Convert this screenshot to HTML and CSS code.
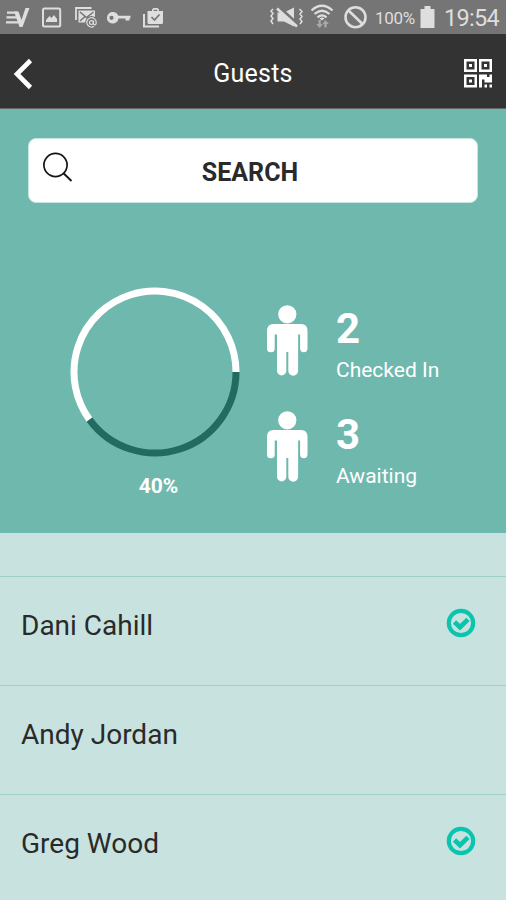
FILE: index.html
```html
<!DOCTYPE html>
<html lang="en">
<head>
<meta charset="utf-8">
<title>Guests</title>
<link rel="stylesheet" href="styles.css">
</head>
<body>
<svg width="0" height="0" class="defs">
  <symbol id="person" viewBox="267 305 41 71">
    <circle cx="287.300" cy="314.300" r="9.100"/>
    <path d="M273.500 324H301Q307.500 324 307.500 331V348.500A3.700 3.700 0 0 1 300.100 348.500V334.500H298.100V370.800A4.300 4.300 0 0 1 288.300 370.800V352H286.300V370.800A4.300 4.300 0 0 1 277 370.800V334.500H274.700V348.500A3.700 3.700 0 0 1 267 348.500V331Q267 324 273.500 324Z"/>
  </symbol>
  <symbol id="check" viewBox="0 0 30 30">
    <circle cx="15" cy="15" r="12.200" fill="none" stroke="currentColor" stroke-width="4.200"/>
    <path d="M8.500 14L14 19.200L22 11.400" fill="none" stroke="currentColor" stroke-width="4.800"/>
  </symbol>
</svg>
<div class="status">
  <svg width="35" height="34" viewBox="0 0 35 34">
    <path d="M7 12.700H17M6.500 17.300H18M6 22.300H18" stroke="#dedede" stroke-width="2.300"/>
    <path d="M14 11.500H18.500L21.500 20L25.500 8H29.500L22.500 27H19.500Z" fill="#dedede"/>
  </svg>
  <svg width="34" height="34" viewBox="35 0 34 34">
    <rect x="43" y="8.500" width="17.200" height="18" rx="1.500" fill="none" stroke="#dedede" stroke-width="2"/>
    <path d="M46 22V20L49.500 16L51.500 18L54 15L57 19V22Z" fill="#dedede"/>
  </svg>
  <svg width="33" height="34" viewBox="69 0 33 34">
    <path d="M76 20V8H91.500" fill="none" stroke="#dedede" stroke-width="1.800"/>
    <path d="M78.500 10.500H95V17H89L86 22.500H78.500Z" fill="#dedede"/>
    <path d="M80 12L86.500 17.500L93.500 12M80 21L85 16.500" fill="none" stroke="#757575" stroke-width="1.500"/>
    <circle cx="91.500" cy="22.200" r="6.200" fill="#757575"/>
    <path d="M94 26.300A4.700 4.700 0 1 1 96.200 22.200Q96.200 24.800 94.600 24.800Q93.200 24.800 93.400 22.800L93.700 20.500" fill="none" stroke="#dedede" stroke-width="1.200"/>
    <circle cx="91.400" cy="22.600" r="1.900" fill="none" stroke="#dedede" stroke-width="1.200"/>
  </svg>
  <svg width="35" height="34" viewBox="102 0 35 34">
    <path fill-rule="evenodd" d="M113 12A5.800 5.800 0 0 1 118.300 15.800H130.500V18.300H129.500V20.500H125.500V18.500H118.500A5.800 5.800 0 1 1 113 12ZM111.500 15.700A2.100 2.100 0 1 0 111.500 19.900A2.100 2.100 0 0 0 111.500 15.700Z" fill="#dedede"/>
  </svg>
  <svg width="33" height="34" viewBox="137 0 33 34">
    <path d="M144 14V26.500H159" fill="none" stroke="#dedede" stroke-width="2"/>
    <path fill-rule="evenodd" d="M152 11V9.500L153.500 8H157.500L159 9.500V11H163V22.500Q163 24 161.500 24H149Q147.500 24 147.500 22.500V11ZM153.700 11H157.300V9.700H153.700Z" fill="#dedede"/>
    <path d="M151.500 17L154.500 20L159.500 14.500" fill="none" stroke="#757575" stroke-width="1.700"/>
  </svg>
  <span class="grow"></span>
  <svg width="41" height="34" viewBox="266 0 41 34">
    <path d="M277.500 12.500H284L294 7.500V26.500L284 21.500H277.500Z" fill="#dedede"/>
    <path d="M279.500 8.500L298.500 26" stroke="#757575" stroke-width="4.500"/>
    <path d="M277 8.500L297 26.500" stroke="#dedede" stroke-width="2.600"/>
    <path d="M273 9L271 11L273 13.500L271 16L273 18.500L271 21L273 24M299.500 9L302 11.500L300 14L302 16.500L300 19L302 21.500L300 24" fill="none" stroke="#dedede" stroke-width="1.500"/>
  </svg>
  <svg width="31" height="34" viewBox="307 0 31 34">
    <path d="M311.500 10.500Q322 1 332.500 10.500M314.500 14Q322 7.500 329.500 14M317.500 17.300Q322 13.500 326.500 17.300" fill="none" stroke="#dedede" stroke-width="2.200"/>
    <path d="M319.500 18.500L322 17.200L324.500 18.500L322 20.500Z" fill="#dedede"/>
    <path d="M318.500 20H320.800V24H323L319.600 28L316.200 24H318.500ZM324.300 27.500V24H322.500L325.500 20L328.800 24H326.600V27.500Z" fill="#a9a9a9"/>
  </svg>
  <svg width="35" height="34" viewBox="338 0 35 34">
    <circle cx="355.500" cy="17.200" r="10" fill="none" stroke="#dedede" stroke-width="2.600"/>
    <path d="M348.500 10.500L362.500 24" stroke="#dedede" stroke-width="2.600"/>
  </svg>
  <span class="pct">100%</span>
  <svg width="18" height="34" viewBox="419 0 18 34">
    <path d="M424.500 6H430.500V9H434.500V28H420.500V9H424.500Z" fill="#dedede"/>
  </svg>
  <span class="time">19:54</span>
</div>
<header class="bar">
  <svg width="34" height="34" viewBox="7 57 34 34">
    <path d="M30.500 60.500L17 74L30.500 87.500" fill="none" stroke="#fff" stroke-width="4.600"/>
  </svg>
  <h1 class="title">Guests</h1>
  <svg class="qr" width="28" height="29" viewBox="0 0 28 29">
    <g fill="none" stroke="#fff" stroke-width="2.500">
      <rect x="1.250" y="1.250" width="10.500" height="10.500"/>
      <rect x="16.250" y="1.250" width="10.500" height="10.500"/>
      <rect x="1.250" y="16.750" width="10.500" height="10.500"/>
    </g>
    <path d="M5 5h3v3h-3zM20 5h3v3h-3zM5 20.500h3v3h-3zM15 15.500H23V18H25.500V15.500H28V23.500H20.500V20.500H18V28.500H15ZM20.500 25.500h2.500v3h-2.500zM25.500 25.500h2.500v3h-2.500z" fill="#fff"/>
  </svg>
</header>
<section class="summary">
  <div class="search">
    <svg width="32" height="32" viewBox="42 152 32 32">
      <circle cx="55.500" cy="165" r="11.600" fill="none" stroke="#151515" stroke-width="1.700"/>
      <path d="M63.500 173.300L71.500 181" stroke="#151515" stroke-width="1.900"/>
    </svg>
    <span class="search-label">SEARCH</span>
  </div>
  <div class="stats">
    <div class="progress">
      <svg width="170" height="170" viewBox="0 0 170 170">
        <path d="M19.470 132.610A81 81 0 1 1 166 85" fill="none" stroke="#fff" stroke-width="7"/>
        <path d="M166 85A81 81 0 0 1 19.470 132.610" fill="none" stroke="#236b60" stroke-width="7"/>
      </svg>
      <span class="progress-label">40%</span>
    </div>
    <div class="counts">
      <div class="count">
        <svg width="41" height="71"><use href="#person"/></svg>
        <div><div class="number">2</div><div class="label">Checked In</div></div>
      </div>
      <div class="count">
        <svg width="41" height="71"><use href="#person"/></svg>
        <div><div class="number">3</div><div class="label">Awaiting</div></div>
      </div>
    </div>
  </div>
</section>
<ul class="guests">
  <li><span>Dani Cahill</span><svg width="30" height="30"><use href="#check"/></svg></li>
  <li><span>Andy Jordan</span></li>
  <li><span>Greg Wood</span><svg width="30" height="30"><use href="#check"/></svg></li>
</ul>
</body>
</html>
```
FILE: styles.css
```css
* { box-sizing: border-box; }
body {
  margin: 0;
  height: 900px;
  overflow: hidden;
  display: flex;
  flex-direction: column;
  background: #c8e3df;
  font-family: Roboto, sans-serif;
  color: #2a2a2a;
}
svg { display: block; flex: none; }
.defs { height: 0; }
.status { height: 34px; flex: none; display: flex; background: #757575; color: #dedede; }
.grow { flex: 1; }
.pct { width: 46px; padding-left: 2px; font-size: 17px; line-height: 37px; letter-spacing: -.3px; }
.time { width: 69px; padding-left: 7px; font-size: 23.500px; line-height: 36px; letter-spacing: -.7px; white-space: nowrap; }
.bar {
  height: 75px;
  flex: none;
  display: flex;
  align-items: flex-start;
  padding: 23px 14px 0 7px;
  background: #333;
  border-bottom: 1px solid #666;
  color: #fff;
}
.title { flex: 1; margin: 0; padding-left: 1px; text-align: center; font-size: 25px; font-weight: 400; line-height: 33px; letter-spacing: .2px; }
.qr { margin-top: 2px; }
.summary { height: 424px; flex: none; padding: 29px 28px 0; background: #6fb8ae; }
.search {
  height: 65px;
  display: flex;
  padding: 13px 13px 0;
  border: 1px solid #c9e5e1;
  border-radius: 8px;
  background: #fff;
}
.search-label { flex: 1; padding-right: 38px; text-align: center; font-size: 25px; font-weight: 700; line-height: 41px; }
.stats { display: flex; padding: 84px 0 0 41.500px; color: #fff; }
.progress { width: 170px; text-align: center; }
.progress-label { display: block; padding-left: 8px; margin-top: 16px; font-size: 21px; font-weight: 700; line-height: 26px; }
.counts { padding: 18px 0 0 27.500px; }
.count { height: 106px; display: flex; gap: 28px; }
.count svg { fill: #fff; }
.number { font-size: 42px; font-weight: 700; line-height: 48px; }
.label { font-size: 21px; line-height: 34px; white-space: nowrap; }
.guests { list-style: none; margin: 43px 0 0; padding: 0; }
.guests li {
  height: 109px;
  display: flex;
  justify-content: space-between;
  padding: 31px 30px 0 21px;
  border-top: 1px solid #9fd0c8;
  font-size: 28px;
  line-height: 36px;
}
.guests svg { color: #0bc4ad; }
```
